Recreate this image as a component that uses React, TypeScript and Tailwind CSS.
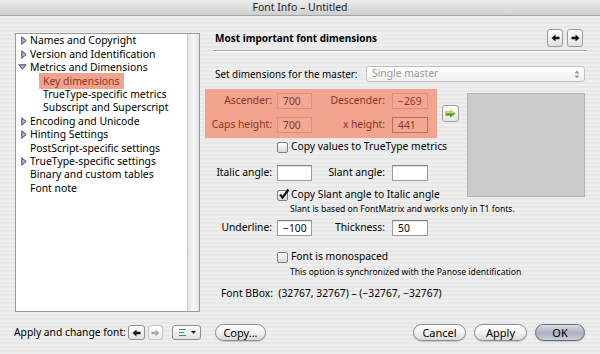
import React from "react";

type TreeItem = { label: string; arrow?: "right" | "down"; indent?: boolean; selected?: boolean };

const TREE: TreeItem[] = [
  { label: "Names and Copyright", arrow: "right" },
  { label: "Version and Identification", arrow: "right" },
  { label: "Metrics and Dimensions", arrow: "down" },
  { label: "Key dimensions", indent: true, selected: true },
  { label: "TrueType-specific metrics", indent: true },
  { label: "Subscript and Superscript", indent: true },
  { label: "Encoding and Unicode", arrow: "right" },
  { label: "Hinting Settings", arrow: "right" },
  { label: "PostScript-specific settings" },
  { label: "TrueType-specific settings", arrow: "right" },
  { label: "Binary and custom tables" },
  { label: "Font note" },
];

const Disclosure = ({ dir }: { dir: "right" | "down" }) =>
  dir === "right" ? (
    <svg width="6" height="9" viewBox="0 0 6 9" className="shrink-0">
      <path d="M0.8 0.8 L5.2 4.5 L0.8 8.2 Z" fill="#b9b2d6" stroke="#4a4460" strokeWidth="1" />
    </svg>
  ) : (
    <svg width="9" height="6" viewBox="0 0 9 6" className="shrink-0">
      <path d="M0.8 0.8 L8.2 0.8 L4.5 5.2 Z" fill="#b9b2d6" stroke="#4a4460" strokeWidth="1" />
    </svg>
  );

const Field = ({ value, tint, focus, w = "w-[35px]" }: { value?: string; tint?: boolean; focus?: boolean; w?: string }) => (
  <div
    className={`${w} h-[16px] flex items-center pl-[5px] leading-none border ${
      tint
        ? focus
          ? "bg-[#f3a895] border-[#b8705e] text-[#8c3422]"
          : "bg-[#f3a895] border-[#e48f7a] text-[#8c3422]"
        : "bg-white border-[#9c9c9c] border-t-[#7e7e7e] text-black shadow-[inset_0_1px_1px_rgba(0,0,0,0.12)]"
    }`}
  >
    {value}
  </div>
);

const Check = ({ checked }: { checked?: boolean }) => (
  <div className="relative w-[11px] h-[11px] shrink-0 rounded-[2px] border border-[#7f7f7f] bg-gradient-to-b from-white to-[#d9d9d9]">
    {checked && (
      <svg width="12" height="12" viewBox="0 0 12 12" className="absolute left-[0px] top-[-3px]">
        <path d="M2 6.5 L4.6 9.5 L10.5 1.5" fill="none" stroke="#111" strokeWidth="2.2" />
      </svg>
    )}
  </div>
);

const Arrow = ({ dir, dim }: { dir: "left" | "right"; dim?: boolean }) => (
  <svg width="9" height="8" viewBox="0 0 9 8">
    <path
      d={dir === "left" ? "M0.5 4 L4.5 0.5 L4.5 2.7 L8.5 2.7 L8.5 5.3 L4.5 5.3 L4.5 7.5 Z" : "M8.5 4 L4.5 0.5 L4.5 2.7 L0.5 2.7 L0.5 5.3 L4.5 5.3 L4.5 7.5 Z"}
      fill={dim ? "#a8a8a8" : "#111"}
    />
  </svg>
);

const Pill = ({ label, w, primary }: { label: string; w: string; primary?: boolean }) => (
  <div
    className={`${w} h-[17px] rounded-full border flex items-center justify-center text-[11px] leading-none ${
      primary
        ? "border-[#5f6a78] bg-gradient-to-b from-[#dde2e8] via-[#a9b2be] to-[#c6ced8] text-black"
        : "border-[#8a8a8a] bg-gradient-to-b from-white via-[#f1f1f1] to-[#dadada] text-black"
    } shadow-[0_1px_1px_rgba(0,0,0,0.15)]`}
  >
    {label}
  </div>
);

export default function App() {
  return (
    <div className="w-[600px] h-[354px] overflow-hidden font-['Noto_Sans',sans-serif] text-[10.3px] text-black bg-[repeating-linear-gradient(to_bottom,#eeeeee_0px,#eeeeee_2px,#e8e8e8_2px,#e8e8e8_4px)]">
      {/* title bar */}
      <div className="h-[16px] flex items-center justify-center border-b border-[#a4a4a4] bg-gradient-to-b from-[#ededed] to-[#cfcfcf] text-[10.5px] leading-none text-[#222]">
        Font Info – Untitled
      </div>

      <div className="flex">
        {/* outline */}
        <div className="ml-[15px] mt-[17px] w-[185px] h-[279px] flex border border-[#9a9a9a] bg-white">
          <div className="flex-1 flex flex-col">
            {TREE.map((t) => (
              <div key={t.label} className="h-[13.4px] flex items-center whitespace-nowrap text-[10.4px] leading-none">
                {t.indent ? (
                  <span
                    className={`ml-[23px] px-[4px] ${
                      t.selected ? "bg-[#f2a28e] text-[#8c3422] py-[3px] -my-[3px]" : ""
                    }`}
                  >
                    {t.label}
                  </span>
                ) : (
                  <>
                    <span className="w-[14px] flex justify-end pr-[3px]">{t.arrow && <Disclosure dir={t.arrow} />}</span>
                    <span>{t.label}</span>
                  </>
                )}
              </div>
            ))}
          </div>
          <div className="w-[12px] border-l border-[#cfcfcf] bg-gradient-to-r from-[#e2e2e2] via-[#f7f7f7] to-[#e4e4e4]" />
        </div>

        {/* right pane */}
        <div className="ml-[5px] w-[385px] pt-[12px]">
          <div className="h-[20px] flex items-center pl-[10px] pr-[7px]">
            <span className="font-bold text-[10px] whitespace-nowrap">Most important font dimensions</span>
            <div className="ml-auto flex gap-[4px]">
              <div className="w-[16px] h-[18px] flex items-center justify-center rounded-[3px] border border-[#9a9a9a] bg-gradient-to-b from-white to-[#e2e2e2]">
                <Arrow dir="left" />
              </div>
              <div className="w-[16px] h-[18px] flex items-center justify-center rounded-[3px] border border-[#9a9a9a] bg-gradient-to-b from-white to-[#e2e2e2]">
                <Arrow dir="right" />
              </div>
            </div>
          </div>
          <div className="mt-[2px] ml-[8px] mr-[3px] border-t border-[#a8a8a8] border-b border-b-white" />

          <div className="mt-[14px] h-[16px] flex items-center pl-[10px] pr-[5px]">
            <span className="whitespace-nowrap text-[9.9px]">Set dimensions for the master:</span>
            <div className="ml-auto w-[219px] h-[16px] flex items-center pl-[5px] pr-[4px] rounded-[3px] border border-[#c2c2c2] bg-gradient-to-b from-white to-[#f0f0f0] text-[#9b9b9b]">
              <span>Single master</span>
              <svg width="6" height="9" viewBox="0 0 6 9" className="ml-auto">
                <path d="M3 0.5 L5.5 3.5 L0.5 3.5 Z M3 8.5 L5.5 5.5 L0.5 5.5 Z" fill="#9a9a9a" />
              </svg>
            </div>
          </div>

          <div className="mt-[7px] flex">
            <div className="w-[262px] shrink-0 flex flex-col">
              <div className="flex">
                <div className="w-[232px] h-[49px] bg-[#f2a48f] pt-[4px] flex flex-col gap-[8px] text-[#8c3422]">
                  <div className="h-[16px] flex items-center whitespace-nowrap">
                    <span className="w-[67px] text-right">Ascender:</span>
                    <div className="ml-[5px]"><Field value="700" tint /></div>
                    <span className="w-[73px] text-right">Descender:</span>
                    <div className="ml-[7px]"><Field value="−269" tint w="w-[36px]" /></div>
                  </div>
                  <div className="h-[16px] flex items-center whitespace-nowrap">
                    <span className="w-[67px] text-right">Caps height:</span>
                    <div className="ml-[5px]"><Field value="700" tint /></div>
                    <span className="w-[73px] text-right">x height:</span>
                    <div className="ml-[7px]"><Field value="441" tint focus w="w-[36px]" /></div>
                  </div>
                </div>
                <div className="ml-[5px] mt-[16px] w-[17px] h-[17px] flex items-center justify-center rounded-[3px] border border-[#a0a0a0] bg-gradient-to-b from-white to-[#e4e4e4]">
                  <svg width="11" height="9" viewBox="0 0 11 9">
                    <path d="M0.5 2.5 L5 2.5 L5 0.5 L10.5 4.5 L5 8.5 L5 6.5 L0.5 6.5 Z" fill="#2f9a3e" />
                    <path d="M0.5 2.5 L5 2.5 L5 0.5 L10.5 4.5 L0.5 4.5 Z" fill="#d8d23a" />
                  </svg>
                </div>
              </div>

              <div className="mt-[3px] h-[12px] flex items-center pl-[72px] whitespace-nowrap">
                <Check />
                <span className="ml-[3px]">Copy values to TrueType metrics</span>
              </div>

              <div className="mt-[12px] h-[16px] flex items-center whitespace-nowrap">
                <span className="w-[67px] text-right">Italic angle:</span>
                <div className="ml-[5px]"><Field /></div>
                <span className="w-[73px] text-right">Slant angle:</span>
                <div className="ml-[7px]"><Field w="w-[36px]" /></div>
              </div>

              <div className="mt-[8px] h-[12px] flex items-center pl-[72px] whitespace-nowrap">
                <Check checked />
                <span className="ml-[3px]">Copy Slant angle to Italic angle</span>
              </div>
              <div className="mt-[3px] h-[11px] flex items-center pl-[85px] whitespace-nowrap text-[8.6px]">
                Slant is based on FontMatrix and works only in T1 fonts.
              </div>

              <div className="mt-[5px] h-[16px] flex items-center whitespace-nowrap">
                <span className="w-[67px] text-right">Underline:</span>
                <div className="ml-[5px]"><Field value="−100" /></div>
                <span className="w-[73px] text-right">Thickness:</span>
                <div className="ml-[7px]"><Field value="50" w="w-[36px]" /></div>
              </div>

              <div className="mt-[15px] h-[12px] flex items-center pl-[72px] whitespace-nowrap">
                <Check />
                <span className="ml-[3px]">Font is monospaced</span>
              </div>
              <div className="mt-[4px] h-[11px] flex items-center pl-[85px] whitespace-nowrap text-[8.6px]">
                This option is synchronized with the Panose identification
              </div>

              <div className="mt-[10px] h-[12px] flex items-center pl-[16px] whitespace-nowrap">
                Font BBox:&nbsp; (32767, 32767) – (−32767, −32767)
              </div>
            </div>
            <div className="mt-[4px] w-[118px] h-[104px] bg-[#cbcbcb] border border-[#b3b3b3]" />
          </div>
        </div>
      </div>

      {/* bottom bar */}
      <div className="mt-[12px] h-[17px] flex items-center">
        <span className="pl-[14px] w-[128px] whitespace-nowrap">Apply and change font:</span>
        <div className="w-[17px] h-[15px] flex items-center justify-center rounded-[3px] border border-[#8f8f8f] bg-gradient-to-b from-white to-[#e0e0e0]">
          <Arrow dir="left" />
        </div>
        <div className="ml-[3px] w-[15px] h-[15px] flex items-center justify-center rounded-[3px] border border-[#c4c4c4] bg-gradient-to-b from-white to-[#ececec]">
          <Arrow dir="right" dim />
        </div>
        <div className="ml-[9px] w-[29px] h-[15px] flex items-center pl-[6px] pr-[4px] rounded-[3px] border border-[#8f8f8f] bg-gradient-to-b from-white to-[#e0e0e0]">
          <svg width="7" height="7" viewBox="0 0 7 7">
            <path d="M0 0.5 H7 M0 3.5 H5 M0 6.5 H7" stroke="#2e9a86" strokeWidth="1.2" />
          </svg>
          <svg width="5" height="3" viewBox="0 0 5 3" className="ml-auto">
            <path d="M0 0 L5 0 L2.5 3 Z" fill="#222" />
          </svg>
        </div>
        <div className="ml-[14px]">
          <Pill label="Copy..." w="w-[51px]" />
        </div>
        <div className="ml-auto flex gap-[8px] mr-[15px]">
          <Pill label="Cancel" w="w-[53px]" />
          <Pill label="Apply" w="w-[53px]" />
          <Pill label="OK" w="w-[50px]" primary />
        </div>
      </div>
    </div>
  );
}
